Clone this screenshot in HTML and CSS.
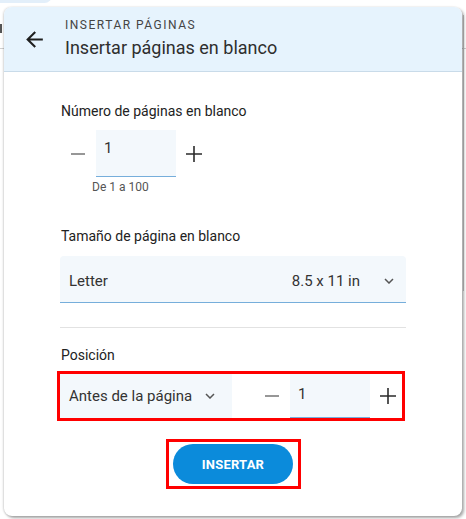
FILE: index.html
```html
<!DOCTYPE html>
<html lang="es">
  <head>
    <meta charset="UTF-8" />
    <meta name="viewport" content="width=device-width, initial-scale=1.0" />
    <title>Insertar páginas</title>
    <link rel="stylesheet" href="styles.css">
  </head>
  <body>
    <div class="backdrop">
      <div class="backdrop-pill"></div>
      <div class="backdrop-glyph"></div>
      <div class="backdrop-line"></div>
      <div class="backdrop-edge"></div>
    </div>

    <div class="panel">
      <div class="panel-header">
        <button class="back" aria-label="Volver">
          <svg width="25" height="25" viewBox="0 0 24 24"><path d="M20 11H7.83l5.59-5.59L12 4l-8 8 8 8 1.41-1.41L7.83 13H20v-2z" fill="#1f1f1f"/></svg>
        </button>
        <div class="titles">
          <div class="overline">INSERTAR PÁGINAS</div>
          <div class="title">Insertar páginas en blanco</div>
        </div>
      </div>

      <div class="panel-body">
        <div class="section">
          <div class="label">Número de páginas en blanco</div>
          <div class="stepper">
            <button class="step">
              <svg width="16" height="16" viewBox="0 0 16 16"><path d="M1 8h14" stroke="#757575" stroke-width="1.6"/></svg>
            </button>
            <div class="field">1</div>
            <button class="step">
              <svg width="16" height="16" viewBox="0 0 16 16"><path d="M0 8h16M8 0v16" stroke="#2b2b2b" stroke-width="1.6"/></svg>
            </button>
          </div>
          <div class="hint">De 1 a 100</div>
        </div>

        <div class="section">
          <div class="label">Tamaño de página en blanco</div>
          <div class="select select-wide">
            <span class="select-name">Letter</span>
            <span class="select-size">8.5 x 11 in</span>
            <svg class="chevron" width="10" height="6" viewBox="0 0 10 6"><path d="M1 1l4 4 4-4" fill="none" stroke="#555" stroke-width="1.5"/></svg>
          </div>
        </div>

        <div class="divider"></div>

        <div class="section">
          <div class="label">Posición</div>
          <div class="highlight position-row">
            <div class="select select-short">
              <span class="select-name">Antes de la página</span>
              <svg class="chevron" width="10" height="6" viewBox="0 0 10 6"><path d="M1 1l4 4 4-4" fill="none" stroke="#555" stroke-width="1.5"/></svg>
            </div>
            <div class="stepper stepper-inline">
              <button class="step">
                <svg width="16" height="16" viewBox="0 0 16 16"><path d="M1 8h14" stroke="#757575" stroke-width="1.6"/></svg>
              </button>
              <div class="field">1</div>
              <button class="step">
                <svg width="16" height="16" viewBox="0 0 16 16"><path d="M0 8h16M8 0v16" stroke="#2b2b2b" stroke-width="1.6"/></svg>
              </button>
            </div>
          </div>
        </div>

        <div class="actions">
          <div class="highlight button-box">
            <button class="primary">INSERTAR</button>
          </div>
        </div>
      </div>
    </div>
  </body>
</html>
```

FILE: styles.css
```css
body {
  margin: 0;
  background-color: #ffffff;
  font-family: Roboto, "Liberation Sans", Arial, sans-serif;
  position: relative;
  height: 519px;
  overflow: hidden;
}

button {
  font-family: inherit;
  border: none;
  background: none;
  padding: 0;
  cursor: pointer;
}

/* page behind the dialog */
.backdrop {
  position: absolute;
  inset: 0;
}

.backdrop-pill {
  position: absolute;
  left: -10px;
  top: -12px;
  width: 62px;
  height: 15px;
  border-radius: 8px;
  background-color: #e3effa;
}

.backdrop-glyph {
  position: absolute;
  left: 0;
  top: 24px;
  width: 2px;
  height: 9px;
  background-color: #555;
}

.backdrop-line {
  position: absolute;
  left: 0;
  right: 0;
  top: 48px;
  height: 1px;
  background-color: #cfcfcf;
}

.backdrop-edge {
  position: absolute;
  right: 2px;
  top: 15px;
  width: 1px;
  height: 276px;
  background-color: #c8c8c8;
}

/* dialog */
.panel {
  position: relative;
  margin: 7px 0 0 4px;
  width: 458px;
  height: 509px;
  background-color: #ffffff;
  border-radius: 8px;
  box-shadow: 2px 2px 3px rgba(0, 0, 0, 0.35), -1px 0 2px rgba(0, 0, 0, 0.15);
  overflow: hidden;
}

.panel-header {
  display: flex;
  align-items: center;
  height: 64px;
  background-color: #e6f3fd;
  border-bottom: 1px solid #c9dbe9;
}

.back {
  width: 40px;
  height: 40px;
  margin-left: 10px;
  display: flex;
  align-items: center;
  justify-content: center;
}

.titles {
  margin-left: 11px;
  margin-top: -2px;
}

.overline {
  font-size: 12px;
  letter-spacing: 1.5px;
  color: #444;
  line-height: 16px;
}

.title {
  font-size: 18px;
  color: #2e2e2e;
  line-height: 22px;
  margin-top: 4px;
}

.panel-body {
  padding: 29px 56px 0 56px;
}

.label {
  font-size: 14px;
  color: #222;
  line-height: 20px;
  padding-left: 1px;
}

.stepper {
  display: flex;
  align-items: stretch;
  margin-top: 9px;
}

.step {
  width: 36px;
  display: flex;
  align-items: center;
  justify-content: center;
}

.field {
  width: 72px;
  height: 46px;
  padding-left: 8px;
  background-color: #f3f8fc;
  border-bottom: 1px solid #76aedb;
  font-size: 15px;
  color: #333;
  line-height: 36px;
}

.hint {
  font-size: 12px;
  color: #555;
  margin-top: 3px;
  padding-left: 32px;
  line-height: 14px;
}

.section + .section {
  margin-top: 32px;
}

.select {
  display: flex;
  align-items: center;
  background-color: #f3f8fc;
  font-size: 15px;
  color: #333;
}

.select-wide {
  box-sizing: border-box;
  margin-top: 10px;
  height: 47px;
  padding: 3px 12px 0 9px;
  border-radius: 4px 4px 0 0;
  border-bottom: 1px solid #76aedb;
}

.select-wide .select-name {
  flex: 1;
}

.select-size {
  margin-right: 24px;
}

.divider {
  height: 1px;
  background-color: #e2e2e2;
  margin-top: 24px;
}

.divider + .section {
  margin-top: 17px;
}

.highlight {
  border: 3px solid #ff0000;
}

.position-row {
  display: flex;
  align-items: stretch;
  margin-top: 6px;
  margin-left: -3px;
  width: 342px;
  height: 44px;
}

.select-short {
  width: 172px;
  padding-left: 9px;
  box-sizing: border-box;
}

.select-short .chevron {
  margin-left: 13px;
}

.stepper-inline {
  margin-top: 0;
  margin-left: auto;
  margin-right: -4px;
}

.stepper-inline .field {
  height: 43px;
  line-height: 40px;
}

.actions {
  display: flex;
  justify-content: center;
  margin-top: 18px;
  padding-left: 1px;
}

.button-box {
  padding: 2px 5px 2px 4px;
}

.primary {
  width: 120px;
  height: 40px;
  border-radius: 20px;
  background-color: #0b8bdb;
  color: #ffffff;
  font-size: 13px;
  font-weight: 700;
  letter-spacing: 0.2px;
}
```
